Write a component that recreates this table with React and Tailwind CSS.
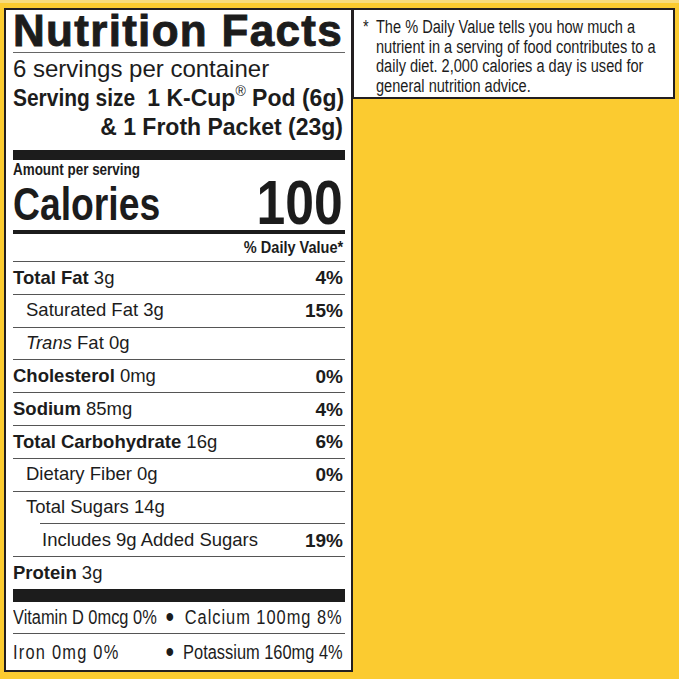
import React from 'react';

const rows = [
    { bold: 'Total Fat', rest: ' 3g', dv: '4%' },
    { label: 'Saturated Fat 3g', dv: '15%', indent: 1 },
    { italic: 'Trans', rest: ' Fat 0g', indent: 1 },
    { bold: 'Cholesterol', rest: ' 0mg', dv: '0%' },
    { bold: 'Sodium', rest: ' 85mg', dv: '4%' },
    { bold: 'Total Carbohydrate', rest: ' 16g', dv: '6%' },
    { label: 'Dietary Fiber 0g', dv: '0%', indent: 1 },
    { label: 'Total Sugars 14g', indent: 1 },
    { label: 'Includes 9g Added Sugars', dv: '19%', indent: 2 },
    { bold: 'Protein', rest: ' 3g' },
];

function NutrientRow({ row }) {
    const indented = row.indent === 2;
    return (
        <div
            className={
                'h-[32.8px] flex items-center justify-between border-t border-[#555] ' +
                (indented ? 'ml-[27px] pl-[2px]' : row.indent === 1 ? 'pl-[13px]' : '')
            }
        >
            <span className="text-[18.5px] leading-none whitespace-pre">
                {row.bold && <span className="font-bold">{row.bold}</span>}
                {row.italic && <span className="italic">{row.italic}</span>}
                {row.label}
                {row.rest}
            </span>
            {row.dv && <span className="font-bold text-[19px] leading-none pr-[2px]">{row.dv}</span>}
        </div>
    );
}

function MineralRow({ left, right, leftClass = '', rightClass = '', className = '' }) {
    return (
        <div className={'flex items-center ' + className}>
            <div className="w-[402px] shrink-0 flex items-center text-[20px] leading-none whitespace-nowrap scale-x-[0.82] origin-left">
                <span className={'w-[186px] ' + leftClass}>{left}</span>
                <span className="w-[18px] text-[30px] leading-[20px]">•</span>
                <span className={'flex-1 text-right ' + rightClass}>{right}</span>
            </div>
        </div>
    );
}

export default function App() {
    return (
        <div className="w-[679px] h-[679px] bg-[#fbcb30] border-t-[3px] border-t-[#f8dc7c] flex items-start pt-[5px] pl-[4px] font-['Liberation_Sans',Arial,sans-serif] text-[#1c1c1c]">
            {/* Label */}
            <div className="w-[349px] h-[664px] shrink-0 bg-white border-2 border-[#231f20] flex flex-col pl-[7px] pr-[6px]">
                <div className="h-[43px] flex items-center border-b border-[#666]">
                    <span className="text-[44px] leading-none font-bold tracking-[1.3px] [-webkit-text-stroke:0.9px_#1c1c1c] whitespace-nowrap">
                        Nutrition Facts
                    </span>
                </div>
                <div className="h-[31px] flex items-center text-[24px] leading-none">6 servings per container</div>
                <div className="h-[29px] flex items-center justify-between font-bold text-[23px] leading-none whitespace-nowrap pr-[2px]">
                    <span className="inline-block scale-x-[0.91] origin-left">Serving size</span>
                    <span>
                        1 K-Cup<sup className="text-[14px] font-normal -top-[0.7em]">®</sup> Pod (6g)
                    </span>
                </div>
                <div className="h-[29px] flex items-center justify-end font-bold text-[23px] leading-none pr-[2px]">
                    &amp; 1 Froth Packet (23g)
                </div>
                <div className="mt-[8px] h-[10px] bg-[#1c1c1c]" />
                <div className="h-[20px] flex items-center font-bold text-[16px] leading-none">
                    <span className="inline-block scale-x-[0.84] origin-left whitespace-nowrap">Amount per serving</span>
                </div>
                <div className="h-[50px] flex items-center">
                    <div className="w-[402px] shrink-0 flex items-center justify-between font-bold leading-none scale-x-[0.82] origin-left">
                        <span className="text-[45.5px]">Calories</span>
                        <span className="text-[63px] -mt-[6px]">100</span>
                    </div>
                </div>
                <div className="h-[4px] bg-[#1c1c1c]" />
                <div className="h-[27px] flex items-center justify-end font-bold text-[17px] leading-none pr-[2px]">
                    <span className="inline-block scale-x-[0.855] origin-right whitespace-nowrap">% Daily Value*</span>
                </div>

                {rows.map((row, i) => (
                    <NutrientRow key={i} row={row} />
                ))}

                <div className="h-[13px] bg-[#1c1c1c]" />
                <MineralRow
                    className="h-[31px]"
                    left="Vitamin D 0mcg 0%"
                    right="Calcium 100mg 8%"
                    rightClass="tracking-[1.2px]"
                />
                <MineralRow
                    className="flex-1 border-t border-[#555]"
                    left="Iron 0mg 0%"
                    leftClass="tracking-[1.5px]"
                    right="Potassium 160mg 4%"
                />
            </div>

            {/* Footnote */}
            <div className="w-[323px] h-[91px] shrink-0 -ml-[1px] bg-white border-2 border-[#231f20] pl-[9px] pt-[8px] text-[18px] leading-[19.7px]">
                <div className="flex whitespace-nowrap scale-x-[0.81] origin-left">
                    <span className="w-[16px] shrink-0">*</span>
                    <span>
                        The % Daily Value tells you how much a
                        <br />
                        nutrient in a serving of food contributes to a
                        <br />
                        daily diet. 2,000 calories a day is used for
                        <br />
                        general nutrition advice.
                    </span>
                </div>
            </div>
        </div>
    );
}
